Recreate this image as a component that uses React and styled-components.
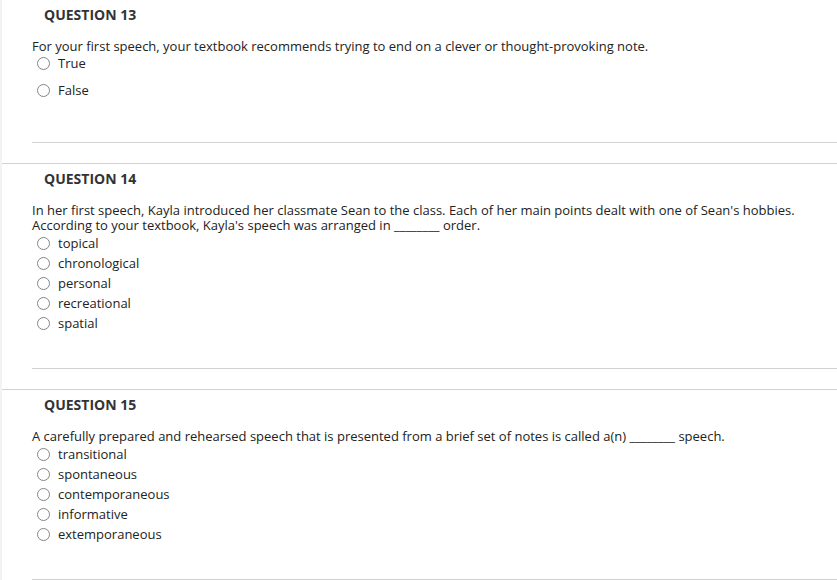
import React from "react";
import styled, { createGlobalStyle } from "styled-components";

const GlobalStyle = createGlobalStyle`
  html, body {
    margin: 0;
    padding: 0;
    background: #ffffff;
  }
  body {
    font-family: "Open Sans", "Noto Sans", Arial, sans-serif;
    color: #222;
  }
`;

const questions = [
  {
    number: 13,
    text: ["For your first speech, your textbook recommends trying to end on a clever or thought-provoking note."],
    options: ["True", "False"],
    spaced: true,
  },
  {
    number: 14,
    text: [
      "In her first speech, Kayla introduced her classmate Sean to the class. Each of her main points dealt with one of Sean's hobbies.",
      "According to your textbook, Kayla's speech was arranged in ________ order.",
    ],
    options: ["topical", "chronological", "personal", "recreational", "spatial"],
  },
  {
    number: 15,
    text: [
      "A carefully prepared and rehearsed speech that is presented from a brief set of notes is called a(n) ________ speech.",
    ],
    options: ["transitional", "spontaneous", "contemporaneous", "informative", "extemporaneous"],
  },
];

function Question({ q, last }) {
  return (
    <QuestionBlock $last={last}>
      <Header>QUESTION {q.number}</Header>
      <Body>
        <Prompt>
          {q.text.map((line, i) => (
            <PromptLine key={i}>{line}</PromptLine>
          ))}
        </Prompt>
        <Options $spaced={q.spaced}>
          {q.options.map((opt) => (
            <Option key={opt}>
              <Radio />
              <span>{opt}</span>
            </Option>
          ))}
        </Options>
      </Body>
    </QuestionBlock>
  );
}

export default function App() {
  return (
    <>
      <GlobalStyle />
      <Page>
        {questions.map((q, i) => (
          <Question key={q.number} q={q} last={i === questions.length - 1} />
        ))}
      </Page>
    </>
  );
}

const Page = styled.div`
  width: 835px;
  min-height: 580px;
  border-left: 2px solid #f3f3f3;
`;

const QuestionBlock = styled.div`
  border-bottom: ${(p) => (p.$last ? "none" : "1px solid #d2d2d2")};
  padding-bottom: 20px;
`;

const Header = styled.h3`
  margin: 0;
  padding: 5px 0 0 42px;
  font-size: 14px;
  line-height: 20px;
  font-weight: 700;
  color: #333;
`;

const Body = styled.div`
  margin: 13px 0 0 30px;
  padding-bottom: 35px;
  border-bottom: 1px solid #d2d2d2;
`;

const Prompt = styled.div`
  font-size: 13px;
  color: #222;
`;

const PromptLine = styled.div`
  height: 15px;
  line-height: 16px;
  white-space: nowrap;
`;

const Options = styled.div`
  display: flex;
  flex-direction: column;
  gap: ${(p) => (p.$spaced ? "7px" : "0")};
  padding: ${(p) => (p.$spaced ? "0 0 7px 5px" : "1px 0 0 5px")};
`;

const Option = styled.label`
  display: flex;
  align-items: center;
  gap: 8px;
  height: 20px;
  font-size: 13px;
  color: #222;
`;

const Radio = styled.span`
  box-sizing: border-box;
  width: 13px;
  height: 13px;
  border: 1px solid #858585;
  border-radius: 50%;
  background: #fff;
  flex-shrink: 0;
`;
